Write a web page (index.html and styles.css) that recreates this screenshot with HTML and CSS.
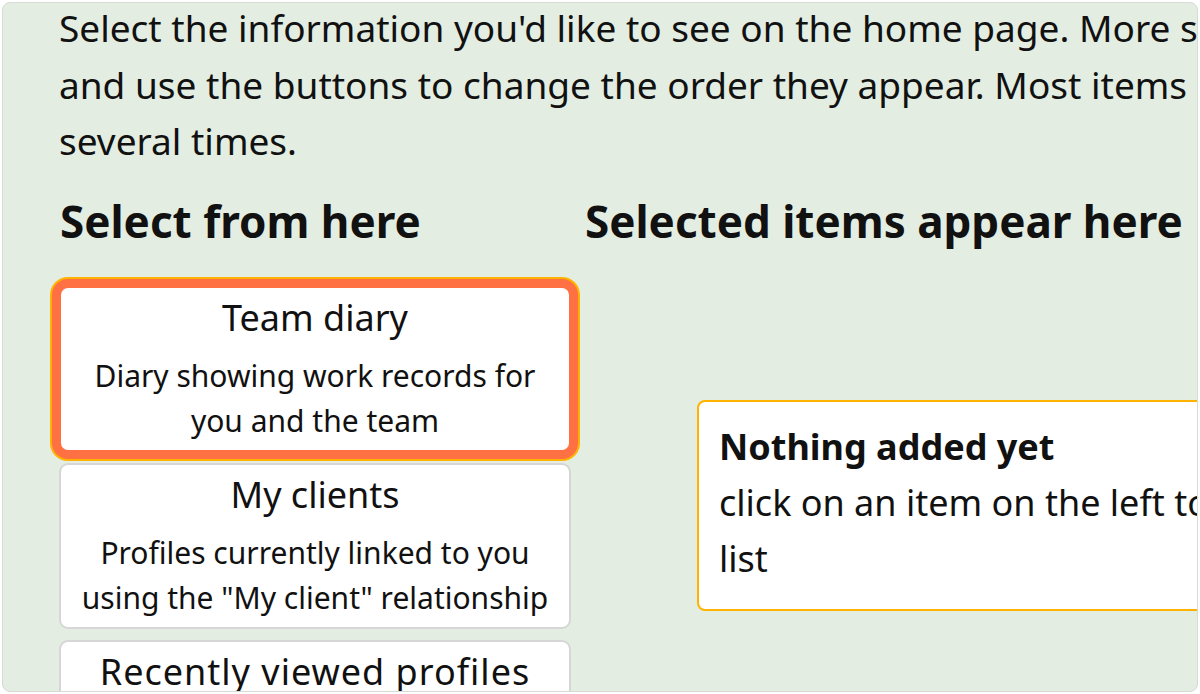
FILE: index.html
```html
<!DOCTYPE html>
<html lang="en">
<head>
<meta charset="utf-8">
<title>Home page items</title>
<link rel="stylesheet" href="styles.css">
</head>
<body>
<div class="panel">
  <p class="intro"><span class="line">Select the information you'd like to see on the home page. More selected items are shown first,</span><span class="line">and use the buttons to change the order they appear. Most items can be added</span><span class="line">several times.</span></p>
  <div class="columns">
    <section class="col-left">
      <h2 class="heading">Select from here</h2>
      <div class="card-list">
        <button class="card card-focus">
          <span class="card-title">Team diary</span>
          <span class="card-desc">Diary showing work records for you and the team</span>
        </button>
        <button class="card">
          <span class="card-title">My clients</span>
          <span class="card-desc">Profiles currently linked to you using the "My client" relationship</span>
        </button>
        <button class="card">
          <span class="card-title card-title-wide">Recently viewed profiles</span>
          <span class="card-desc">Profiles you have looked at recently</span>
        </button>
      </div>
    </section>
    <section class="col-right">
      <h2 class="heading">Selected items appear here</h2>
      <div class="empty-box">
        <strong class="empty-title">Nothing added yet</strong>
        <span class="empty-text">click on an item on the left to add it to your</span>
        <span class="empty-text">list</span>
      </div>
    </section>
  </div>
</div>
</body>
</html>
```
FILE: styles.css
```css
html, body {
  margin: 0;
  padding: 0;
  background: #ffffff;
  overflow: hidden;
  height: 694px;
}
body {
  font-family: "Noto Sans", "Open Sans", sans-serif;
  color: #111;
}
.panel {
  margin: 2px 0 0 2px;
  width: 1196px;
  height: 690px;
  background: #e3ede1;
  border-radius: 8px;
  border: 1px solid #d6dbd4;
  box-sizing: border-box;
  padding: 0 0 0 56px;
  overflow: hidden;
}
.intro {
  margin: -3px 0 0 0;
  font-size: 37px;
  line-height: 56.5px;
  white-space: nowrap;
}
.line {
  display: block;
}
.columns {
  display: flex;
  gap: 13px;
  margin-top: 25px;
}
.col-left {
  width: 512px;
  flex: none;
}
.col-right {
  flex: none;
  width: 1000px;
}
.heading {
  margin: 0 0 0 1px;
  font-size: 44px;
  font-weight: 700;
  line-height: 52px;
  white-space: nowrap;
}
.card-list {
  display: flex;
  flex-direction: column;
  gap: 11px;
  margin-top: 39px;
}
.card {
  display: flex;
  flex-direction: column;
  align-items: center;
  background: #fff;
  border: 2px solid #d6d6d6;
  border-radius: 9px;
  padding: 5px 16px 7px;
  font-family: inherit;
  color: #111;
  text-align: center;
  cursor: pointer;
}
.card-focus {
  border-color: #ff7043;
  box-shadow: 0 0 0 7px #ff7043, 0 0 0 9px #ffb300;
}
.card-title {
  font-size: 36px;
  line-height: 50px;
}
.card-title-wide {
  letter-spacing: 1px;
}
.card-desc {
  font-size: 30px;
  line-height: 45px;
  margin-top: 10px;
}
.empty-box {
  margin: 153px 0 0 113px;
  background: #fff;
  border: 2px solid #ffb300;
  border-radius: 8px;
  width: 760px;
  padding: 17px 20px 22px;
  display: flex;
  flex-direction: column;
  font-size: 36px;
  line-height: 56px;
  white-space: nowrap;
}
.empty-title {
  font-weight: 700;
}
```
